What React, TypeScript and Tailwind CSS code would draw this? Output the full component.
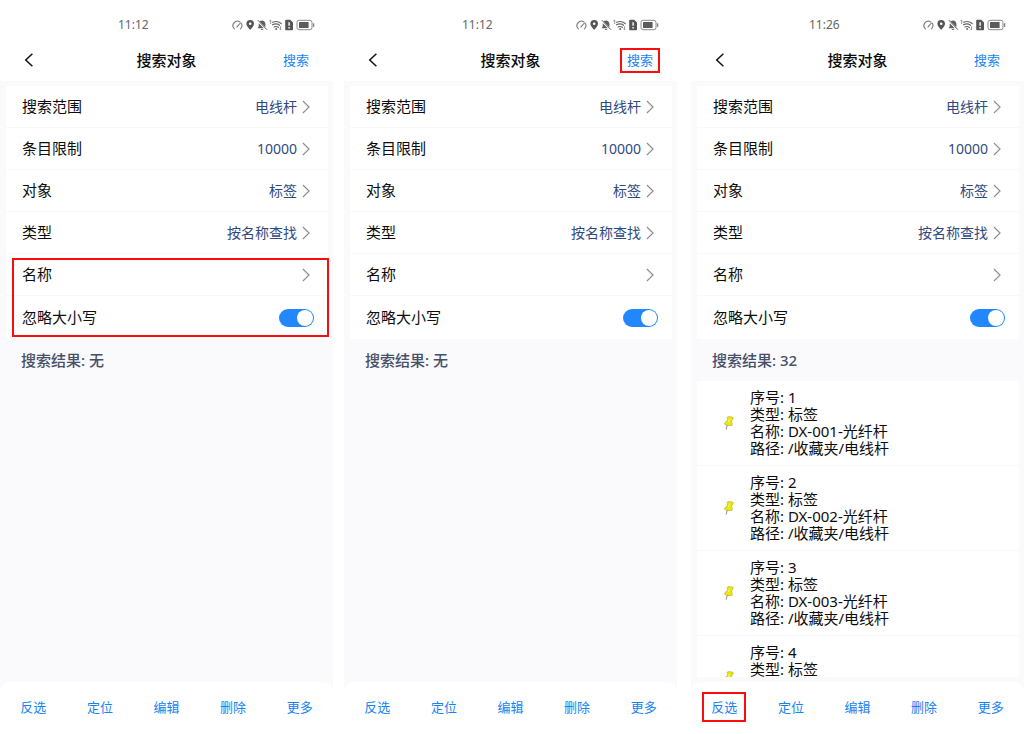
import React, { useState } from "react";

type Mark = "options" | "search" | "invert";

type PhoneProps = {
  time: string;
  mark: Mark;
  results: string[];
  total?: number;
  className?: string;
};

const settings = [
  { label: "搜索范围", value: "电线杆" },
  { label: "条目限制", value: "10000" },
  { label: "对象", value: "标签" },
  { label: "类型", value: "按名称查找" },
];

const actions = ["反选", "定位", "编辑", "删除", "更多"];

const StatusIcons = () => (
  <svg width="84" height="12" viewBox="0 0 84 12" fill="none" aria-hidden="true">
    {/* speed */}
    <path d="M3.4 9.8A4.4 4.4 0 0 1 8.8 2.9M10.4 4.4A4.4 4.4 0 0 1 9.4 9.8M6 7.9 9.4 4" stroke="#777" strokeWidth="1.1" strokeLinecap="round" />
    {/* location */}
    <path fillRule="evenodd" d="M19.2 1a3.8 3.8 0 0 0-3.8 3.8c0 2.5 2.3 4.1 3.8 6.2 1.5-2.1 3.8-3.7 3.8-6.2A3.8 3.8 0 0 0 19.2 1Zm0 2.5a1.3 1.3 0 1 1 0 2.6 1.3 1.3 0 0 1 0-2.6Z" fill="#555" />
    {/* muted bell */}
    <path d="M28.6 2.4c2.2-2 5.8-.7 5.8 2.4v3.4ZM27.7 4.2v3.3l-1.1 1.7h6.2ZM29.5 9.9h3c-.5 1.4-2.5 1.4-3 0Z" fill="#606060" />
    <path d="m26.9 1.2 9 9.5" stroke="#555" strokeWidth="1" />
    {/* wifi */}
    <path d="M41.6 3.3c3.1-1.4 6.2-.8 8.6 1.2M41.5 5.8c2.4-1.2 5-1 7.1.5M43 8c1.4-.7 3.1-.6 4.4.4" stroke="#666" strokeWidth="1.2" strokeLinecap="round" />
    <circle cx="45.2" cy="10" r="1" fill="#666" />
    <path d="M39.7 1v4M38.2 2.3l1.5-1.5M49.6 7.3v3.5m-1.3-1.2 1.3 1.3" stroke="#777" strokeWidth=".8" />
    {/* sim card */}
    <path d="M55 .8h4.2L62 3.5v6.9a.8.8 0 0 1-.8.8H55a.8.8 0 0 1-.8-.8V1.6c0-.5.3-.8.8-.8Z" fill="#555" />
    <path d="M58.1 3.2v3.6M58.1 8.1v1.3" stroke="#fff" strokeWidth="1.4" />
    {/* battery */}
    <rect x="66" y="1.3" width="15" height="9.4" rx="2.2" stroke="#888" />
    <rect x="68" y="3" width="9.6" height="6" rx=".6" fill="#5c5c5c" />
    <path d="M82.6 4.3v3.6" stroke="#888" strokeWidth="1.4" />
  </svg>
);

const PinIcon = () => (
  <svg width="12" height="16" viewBox="0 0 12 16" aria-hidden="true">
    <path d="M4.2 10.4 3.2 14.2" stroke="#999" strokeWidth="1.1" strokeLinecap="round" />
    <path d="M4.6 1.8c1.6-.4 4.2-.1 5.6.8.5.5.2 1.3-.7 1.4L8.4 7c.9.8 1.1 1.9.7 3.3-2.2.7-5.6.2-7.6-1.2.1-1.4.9-2.4 2.4-2.7l1-2.7c-.9-.6-1-1.4-.3-1.9Z" fill="#f0e800" stroke="#96921f" strokeWidth=".5" />
    <path d="m6.3 4.2-.7 2.7" stroke="#fffb8a" strokeWidth=".9" />
  </svg>
);

const Chevron = () => (
  <svg width="8" height="14" viewBox="0 0 8 14" fill="none" aria-hidden="true">
    <path d="m.9 1 6.2 6-6.2 6" stroke="#8c8c8c" strokeWidth="1.1" />
  </svg>
);

const SettingRow = ({ label, value }: { label: string; value?: string }) => (
  <button
    type="button"
    className="flex h-[42px] w-full items-center border-b border-[#f8f8f9] pr-[18px] pl-4 text-left"
  >
    <span className="text-[15px]">{label}</span>
    <span className="mr-[5px] ml-auto text-sm text-[#304a80]">{value}</span>
    <Chevron />
  </button>
);

const Phone = ({ time, mark, results, total, className = "" }: PhoneProps) => {
  const [ignoreCase, setIgnoreCase] = useState(true);

  return (
    <section className={`flex min-w-0 flex-1 flex-col bg-[#fafafc] ${className}`}>
      <div className="flex h-[42px] shrink-0 items-center justify-between bg-white pt-2 pr-[18px] pl-[118px]">
        <span className="text-xs text-[#666]">{time}</span>
        <StatusIcons />
      </div>

      <header className="grid h-[39px] shrink-0 grid-cols-3 items-center bg-white px-[17px] pb-[3px]">
        <button type="button" aria-label="返回" className="flex h-6 w-6 items-center justify-center">
          <svg width="10" height="14" viewBox="0 0 10 14" fill="none" aria-hidden="true">
            <path d="M8.4.8 1.7 7l6.7 6.2" stroke="#111" strokeWidth="1.5" />
          </svg>
        </button>
        <h1 className="text-center text-[15px] font-medium">搜索对象</h1>
        <button
          type="button"
          className={`h-[25px] w-10 justify-self-end border-2 text-[13px] leading-5 whitespace-nowrap text-[#1683f5] ${
            mark === "search" ? "border-[#fb0d0d]" : "border-transparent"
          }`}
        >
          搜索
        </button>
      </header>

      <main className="flex min-h-0 flex-1 flex-col pt-[5px] pr-[5px] pb-[5px] pl-[6px]">
        <div className="shrink-0 bg-white">
          {settings.map((item) => (
            <SettingRow key={item.label} label={item.label} value={item.value} />
          ))}
          <div className="relative">
            <SettingRow label="名称" />
            <label className="flex h-[43px] items-center justify-between pr-[14px] pl-4 text-[15px]">
              忽略大小写
              <input
                type="checkbox"
                checked={ignoreCase}
                onChange={(e) => setIgnoreCase(e.target.checked)}
                className="flex h-[18px] w-[35px] appearance-none items-center rounded-full bg-gray-300 px-px before:h-4 before:w-4 before:rounded-full before:bg-white checked:justify-end checked:bg-[#2388ff]"
              />
            </label>
            {mark === "options" && (
              <div className="pointer-events-none absolute top-1 -right-px bottom-0.5 left-1.5 border-2 border-[#fb0d0d]" />
            )}
          </div>
        </div>

        <h2 className="flex h-[42px] shrink-0 items-center pl-[15px] text-[15px] font-medium text-[#475068]">
          搜索结果: {total ?? "无"}
        </h2>

        <ul className="min-h-0 flex-1 overflow-hidden">
          {results.map((name, i) => (
            <li
              key={name}
              className="flex h-[85px] items-center gap-[15px] border-b border-[#f8f8f9] bg-white pl-[26px]"
            >
              <PinIcon />
              <div className="text-[15px] leading-[17px] whitespace-nowrap">
                <p>序号: {i + 1}</p>
                <p>类型: 标签</p>
                <p>名称: {name}-光纤杆</p>
                <p>路径: /收藏夹/电线杆</p>
              </div>
            </li>
          ))}
        </ul>
      </main>

      <nav className="flex h-[52px] shrink-0 rounded-t-[10px] bg-white pb-[3px]">
        {actions.map((action) => (
          <div key={action} className="flex flex-1 items-center justify-center">
            <button
              type="button"
              className={`h-[30px] w-11 border-2 text-[13px] leading-5 text-[#1683f5] ${
                mark === "invert" && action === "反选" ? "border-[#fb0d0d]" : "border-transparent"
              }`}
            >
              {action}
            </button>
          </div>
        ))}
      </nav>
    </section>
  );
};

const App = () => {
  return (
    <div className="flex h-screen bg-white font-['Noto_Sans','Noto_Sans_CJK_SC',sans-serif] text-[#0c0c0c]">
      <Phone time="11:12" mark="options" results={[]} />
      <Phone time="11:12" mark="search" results={[]} className="ml-[11px]" />
      <Phone
        time="11:26"
        mark="invert"
        total={32}
        results={["DX-001", "DX-002", "DX-003", "DX-004"]}
        className="ml-[14px]"
      />
    </div>
  );
};

export default App;
